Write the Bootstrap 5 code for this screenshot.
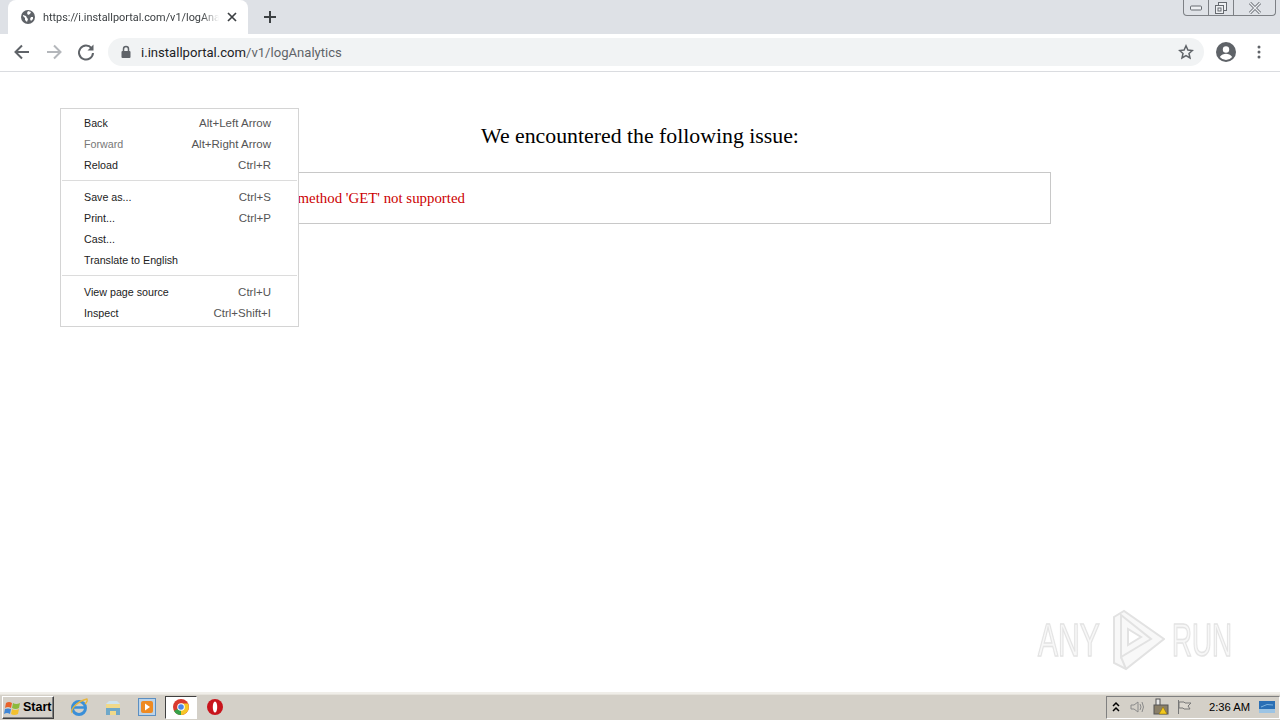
<!DOCTYPE html>
<html lang="en">
<head>
    <meta charset="UTF-8">
    <meta name="viewport" content="width=device-width, initial-scale=1.0">
    <title>i.installportal.com/v1/logAnalytics</title>
    <link href="https://cdn.jsdelivr.net/npm/bootstrap@5.3.0/dist/css/bootstrap.min.css" rel="stylesheet">
    <style>
        html, body { height: 100%; overflow: hidden; }
        body { background: #fff; font-family: "Liberation Serif", serif; }
        .desk { height: 720px; }
        .tabstrip { height: 34px; background: #dee1e6; padding-left: 8px; }
        .tab-on { width: 240px; height: 34px; background: #fff; border-radius: 8px 8px 0 0; padding: 0 11px 0 13px; font: 10.9px "Roboto", sans-serif; color: #3c4043; }
        .tab-name { width: 176px; white-space: nowrap; overflow: hidden; margin-left: 8px; -webkit-mask-image: linear-gradient(90deg, #000 90%, transparent); mask-image: linear-gradient(90deg, #000 90%, transparent); }
        .new-tab { margin-left: 14px; }
        .win-btns { width: 93px; height: 16px; margin-right: 4px; border: 1px solid #7d8085; border-top: 0; border-radius: 0 0 4px 4px; background: #dfe2e7; }
        .win-btn { height: 100%; width: 25px; border-right: 1px solid #7d8085; }
        .win-btn:last-child { border-right: 0; width: auto; }
        .toolbar { height: 36px; background: #fff; border-bottom: 1px solid #dadce0; padding: 0 0 1px 12px; box-sizing: content-box; }
        .tool-ico { width: 20px; height: 20px; margin-right: 12px; }
        .omni { height: 28px; width: 1096px; background: #f1f3f4; border-radius: 14px; padding: 0 10px 0 12px; font: 13.1px "Roboto", sans-serif; }
        .omni-host { color: #202124; margin-left: 9px; }
        .omni-path { color: #5f6368; }
        .avatar { margin-left: 12px; }
        .kebab { margin-left: 14px; }
        .page-area { flex: 1 1 auto; position: relative; }
        .issue-title { font: 21.8px/28px "Liberation Serif", serif; color: #000; text-align: center; margin: 50px 0 22px; }
        .issue-box { width: 822px; height: 52px; margin: 0 auto; border: 1px solid #c8c8c8; padding: 0 16px; color: #c00; font: 14.85px "Liberation Serif", serif; }
        .ctx-menu { position: absolute; left: 60px; top: 36px; width: 239px; background: #fff; border: 1px solid #d4d4d4; padding: 3px 1px; font: 10.7px "Liberation Sans", sans-serif; color: #222; }
        .ctx-row { height: 21px; padding: 0 26px 0 22px; }
        .ctx-row .keys { color: #555; font-size: 11.5px; }
        .ctx-off { color: #777; }
        .ctx-sep { height: 1px; background: #dcdcdc; margin: 5px 0; }
        .wmark { position: absolute; left: 1038px; top: 537px; }
        .wmark-txt { font: 47px/60px "Liberation Sans", sans-serif; color: #f7f7f7; -webkit-text-stroke: 1.5px #e4e4e4; text-shadow: 0 0 2px #e8e8e8; transform-origin: left center; white-space: nowrap; }
        .wmark-any { width: 70px; transform: scaleX(.64); }
        .wmark-run { width: 60px; margin-left: 7px; transform: scaleX(.59); }
        .taskbar { height: 28px; background: #d4d0c8; border-top: 2px solid #f0eee9; box-shadow: inset 0 1px 0 #e6e3dc; }
        .start-btn { width: 52px; height: 23px; margin-left: 2px; background: #d4d0c8; border: 1px solid; border-color: #fff #404040 #404040 #fff; box-shadow: inset -1px -1px 0 #808080; font: 700 12.5px "Liberation Sans", sans-serif; color: #000; padding-left: 1px; gap: 1px; }
        .quick { margin-left: 15px; }
        .quick-ico { width: 20px; height: 20px; }
        .chrome-task { width: 32px; height: 23px; background: #fff; border: 1px solid; border-color: #404040 #fff #fff #404040; margin: 0 8px 0 8px; }
        .tray { width: 174px; height: 23px; border: 1px solid; border-color: #808080 #fff #fff #808080; font: 11.2px "Liberation Sans", sans-serif; color: #000; padding-left: 4px; }
        .tray-clock { margin-left: 17px; white-space: nowrap; }
    </style>
</head>
<body>
<div class="desk d-flex flex-column">
    <div class="tabstrip d-flex align-items-start">
        <div class="tab-on d-flex align-items-center">
            <svg width="14" height="14" viewBox="0 0 14 14"><circle cx="7" cy="7" r="7" fill="#5f6368"/><path d="M2 5l3 1 1 2 1 1-1 3-2-2V8L2 6zM7 1l3 1-1 2-2 1-1-2zM10 7l2 0 0 2-2 2-1-2z" fill="#fff"/></svg>
            <div class="tab-name">https://i.installportal.com/v1/logAnalytics</div>
            <svg class="ms-auto" width="10" height="10" viewBox="0 0 10 10"><path d="M1 1l8 8M9 1l-8 8" stroke="#3c4043" stroke-width="1.7"/></svg>
        </div>
        <svg class="new-tab mt-2" width="16" height="18" viewBox="0 0 16 18"><path d="M8 3v12M2 9h12" stroke="#3c4043" stroke-width="2"/></svg>
        <div class="win-btns ms-auto d-flex">
            <div class="win-btn d-flex align-items-center justify-content-center">
                <svg width="12" height="6" viewBox="0 0 12 6"><rect x=".5" y="1" width="11" height="4" rx="1" fill="#eef0f3" stroke="#666a70"/></svg>
            </div>
            <div class="win-btn d-flex align-items-center justify-content-center">
                <svg width="14" height="14" viewBox="0 0 14 14" fill="#eef0f3" stroke="#666a70"><rect x="4.5" y="1.500" width="8" height="8"/><rect x="1.500" y="4.500" width="8" height="8"/><rect x="4" y="7" width="3" height="3"/></svg>
            </div>
            <div class="win-btn flex-fill d-flex align-items-center justify-content-center">
                <svg width="14" height="12" viewBox="0 0 14 12"><path d="M2 1l10 10M12 1L2 11" stroke="#666a70" stroke-width="3"/><path d="M2 1l10 10M12 1L2 11" stroke="#eef0f3" stroke-width="1.400"/></svg>
            </div>
        </div>
    </div>

    <div class="toolbar d-flex align-items-center">
        <svg class="tool-ico" viewBox="0 0 20 20"><path d="M17 10H4M10 3.500L3.500 10l6.500 6.500" fill="none" stroke="#5f6368" stroke-width="2"/></svg>
        <svg class="tool-ico" viewBox="0 0 20 20"><path d="M3 10h13M10 3.500l6.500 6.500-6.500 6.500" fill="none" stroke="#b4b7bb" stroke-width="2"/></svg>
        <svg class="tool-ico" viewBox="0 0 20 20"><path d="M15.500 6.200A7 7 0 1 0 17 11" fill="none" stroke="#5f6368" stroke-width="2"/><path d="M17.500 2.500v6h-6z" fill="#5f6368"/></svg>
        <div class="omni d-flex align-items-center">
            <svg width="12" height="14" viewBox="0 0 12 14"><path d="M3.500 6V4a2.500 2.500 0 0 1 5 0v2" fill="none" stroke="#5f6368" stroke-width="1.500"/><rect x="1.500" y="6" width="9" height="7" rx="1" fill="#5f6368"/></svg>
            <div><span class="omni-host">i.installportal.com</span><span class="omni-path">/v1/logAnalytics</span></div>
            <svg class="ms-auto" width="16" height="16" viewBox="0 0 16 16"><path d="M8 1.800l1.900 4.200 4.500.5-3.400 3 1 4.500L8 11.700l-4 2.300 1-4.500-3.400-3 4.500-.5z" fill="none" stroke="#5f6368" stroke-width="1.500"/></svg>
        </div>
        <svg class="avatar" width="20" height="20" viewBox="0 0 20 20"><circle cx="10" cy="10" r="10" fill="#5f6368"/><circle cx="10" cy="7.500" r="3.200" fill="#fff"/><path d="M3.800 15c1.500-2.600 4-3.300 6.200-3.300s4.700.7 6.200 3.300a8 8 0 0 1-12.400 0z" fill="#fff"/></svg>
        <svg class="kebab" width="16" height="16" viewBox="0 0 16 16"><g fill="#5f6368"><circle cx="9" cy="3" r="1.500"/><circle cx="9" cy="8" r="1.500"/><circle cx="9" cy="13" r="1.500"/></g></svg>
    </div>

    <div class="page-area">
        <h1 class="issue-title">We encountered the following issue:</h1>
        <div class="issue-box d-flex align-items-center">Request method 'GET' not supported</div>

        <div class="ctx-menu">
            <div class="ctx-row d-flex justify-content-between align-items-center"><span>Back</span><span class="keys">Alt+Left Arrow</span></div>
            <div class="ctx-row ctx-off d-flex justify-content-between align-items-center"><span>Forward</span><span class="keys">Alt+Right Arrow</span></div>
            <div class="ctx-row d-flex justify-content-between align-items-center"><span>Reload</span><span class="keys">Ctrl+R</span></div>
            <div class="ctx-sep"></div>
            <div class="ctx-row d-flex justify-content-between align-items-center"><span>Save as...</span><span class="keys">Ctrl+S</span></div>
            <div class="ctx-row d-flex justify-content-between align-items-center"><span>Print...</span><span class="keys">Ctrl+P</span></div>
            <div class="ctx-row d-flex justify-content-between align-items-center"><span>Cast...</span></div>
            <div class="ctx-row d-flex justify-content-between align-items-center"><span>Translate to English</span></div>
            <div class="ctx-sep"></div>
            <div class="ctx-row d-flex justify-content-between align-items-center"><span>View page source</span><span class="keys">Ctrl+U</span></div>
            <div class="ctx-row d-flex justify-content-between align-items-center"><span>Inspect</span><span class="keys">Ctrl+Shift+I</span></div>
        </div>

        <div class="wmark d-flex align-items-center">
            <span class="wmark-txt wmark-any">ANY</span>
            <svg width="57" height="62" viewBox="0 0 57 62" fill="#f8f8f8" stroke="#e2e2e2" stroke-width="2"><path d="M6 8L16 2 56 30 18 60 6 54z"/><path d="M13 6v42l30-18z"/><path d="M20 20v16l13-8z" fill="#fff"/><path d="M6 8v46M13 48l5 12"/></svg>
            <span class="wmark-txt wmark-run">RUN</span>
        </div>
    </div>

    <div class="taskbar d-flex align-items-center">
        <div class="start-btn d-flex align-items-center">
            <svg width="18" height="17" viewBox="0 0 18 17"><path d="M2 4q3-2 6 0l-1 5q-3-2-6 0z" fill="#e8622a"/><path d="M9 4q3 2 7 0l-1 5q-3 2-7 0z" fill="#8cba3c"/><path d="M1 10q3-1 6 0l-1 5q-3-2-6 0z" fill="#3f86d6"/><path d="M8 10q3 2 7 0l-1 5q-4 2-7 0z" fill="#f3c12e"/></svg>
            <span>Start</span>
        </div>
        <div class="quick d-flex align-items-center">
            <svg class="quick-ico" style="margin-right:14px" viewBox="0 0 20 20"><circle cx="10" cy="11" r="6.500" fill="none" stroke="#3a8fd8" stroke-width="3"/><path d="M4 10.500h12" stroke="#3a8fd8" stroke-width="2.500"/><path d="M3 16C1 12 9 4 18 2c1 2-1 4-2 5" fill="none" stroke="#e8b53a" stroke-width="1.300"/></svg>
            <svg class="quick-ico" style="margin-right:14px" viewBox="0 0 20 20"><path d="M3 7h14v11H3z" fill="#f0d98a"/><path d="M3 7l3-3h8l3 3z" fill="#cfe4ef"/><path d="M3 11h14v7h-4v-4H7v4H3z" fill="#6fa8c9"/></svg>
            <svg class="quick-ico" viewBox="0 0 20 20"><rect x="1.500" y="1.500" width="17" height="17" fill="#bcd3e8" stroke="#5b8fc2"/><rect x="4" y="4" width="12" height="12" rx="2" fill="#ee8a22"/><path d="M8 6.500l5 3.500-5 3.500z" fill="#fff"/></svg>
            <div class="chrome-task d-flex align-items-center justify-content-center">
                <svg width="16" height="16" viewBox="0 0 16 16"><circle cx="8" cy="8" r="8" fill="#d93a2f"/><path d="M8 8L1 12a8 8 0 0 0 7 4l4-8z" fill="#36a24a"/><path d="M8 4.500h7A8 8 0 0 1 8 16z" fill="#f6c626"/><circle cx="8" cy="8" r="3.800" fill="#fff"/><circle cx="8" cy="8" r="2.800" fill="#4a86e8"/></svg>
            </div>
            <svg class="quick-ico" viewBox="0 0 20 20"><circle cx="10" cy="10" r="8" fill="#c8141c"/><ellipse cx="10" cy="10" rx="2.200" ry="5.500" fill="#fff"/></svg>
        </div>
        <div class="tray ms-auto d-flex align-items-center">
            <svg width="10" height="12" viewBox="0 0 10 12"><path d="M2 5l3-3 3 3M2 10l3-3 3 3" fill="none" stroke="#000" stroke-width="1.500"/></svg>
            <svg class="ms-2" width="18" height="16" viewBox="0 0 18 16" fill="none" stroke="#8a8a8a"><path d="M2 6h3l4-3v10l-4-3H2zM11 5q2 3 0 6M13 3q3 5 0 10"/></svg>
            <svg style="margin-left:5px" width="18" height="18" viewBox="0 0 18 18"><rect x="4" y="1" width="4" height="8" fill="#e8e8e8" stroke="#555"/><rect x="2" y="7" width="14" height="9" fill="#8a7f68" stroke="#555"/><path d="M11 9l4 7H7z" fill="#f2c81e" stroke="#8a6d00" stroke-width=".5"/></svg>
            <svg style="margin-left:6px" width="16" height="16" viewBox="0 0 16 16" fill="#dcd8d0" stroke="#777"><path d="M2.500 1v14"/><path d="M3 3h5l1 1h6l-3 3 2 3H8L7 9H3z"/></svg>
            <span class="tray-clock">2:36 AM</span>
            <svg class="ms-auto me-1" width="16" height="12" viewBox="0 0 16 12"><rect width="16" height="12" fill="#2a6fb5"/><path d="M0 8h16v4H0z" fill="#9cc4e4"/><path d="M2 6q6-4 12-2" stroke="#7db4e0" fill="none"/></svg>
        </div>
    </div>
</div>
<script src="https://cdn.jsdelivr.net/npm/bootstrap@5.3.0/dist/js/bootstrap.bundle.min.js"></script>
</body>
</html>
